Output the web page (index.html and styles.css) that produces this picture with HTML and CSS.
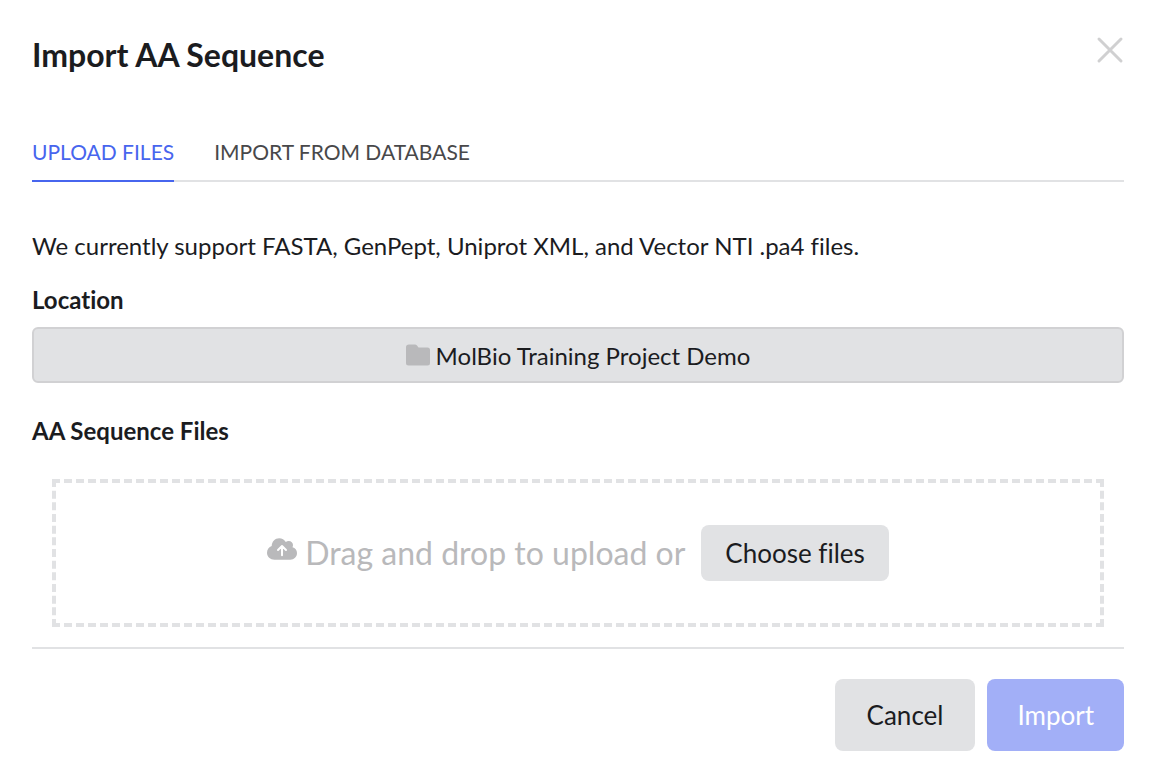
FILE: index.html
```
<!DOCTYPE html>
<html lang="en">
<head>
<meta charset="UTF-8" />
<meta name="viewport" content="width=device-width, initial-scale=1" />
<title>Import AA Sequence</title>
<link rel="stylesheet" href="styles.css">
</head>
<body>
    <main class="modal">
        <header class="modal-header">
            <h1>Import AA Sequence</h1>
            <button type="button" class="close-btn" aria-label="Close">
                <svg viewBox="0 0 28 28" width="28" height="28" fill="none" stroke="#d0d0d1" stroke-width="3" stroke-linecap="round">
                    <path d="M3 3 25 25M25 3 3 25" />
                </svg>
            </button>
        </header>

        <nav class="tabs">
            <a href="#upload" class="tab active">UPLOAD FILES</a>
            <a href="#database" class="tab">IMPORT FROM DATABASE</a>
        </nav>

        <form class="upload-form">
            <p class="hint">We currently support FASTA, GenPept, Uniprot XML, and Vector NTI .pa4 files.</p>

            <label for="location-btn">Location</label>
            <button type="button" id="location-btn" class="location-btn">
                <svg viewBox="0 0 24 22" width="24" height="22" fill="#b9b9bb">
                    <path d="M3 0.500H9Q10 0.500 11 1.500L12.500 3.500H21.500Q24 3.500 24 6V19Q24 21.500 21.500 21.500H2.500Q0 21.500 0 19V3Q0 0.500 3 0.500Z" />
                </svg>
                <span>MolBio Training Project Demo</span>
            </button>

            <label for="choose-btn">AA Sequence Files</label>
            <div class="dropzone">
                <svg class="cloud-icon" viewBox="0 0 30 22" width="30" height="22">
                    <path fill="#b9b9bb" d="M7.500 21.700C3.300 21.700 0 18.600 0 14.700 0 11.600 1.900 9.100 4.700 8.100 4.900 3.600 8 0.300 12.200 0.300 15 0.300 17.500 1.700 18.800 4 19.600 3.300 20.600 3 21.700 3 24.200 3 26 4.800 26 7.100 26 7.800 25.800 8.500 25.500 9.200 28.100 9.800 30 12.200 30 15 30 18.800 27 21.700 23.300 21.700Z" />
                    <path fill="none" stroke="#fff" stroke-width="2" stroke-linecap="round" stroke-linejoin="round" d="M15 17.300V8M11 12 15 8 19 12" />
                </svg>
                <span class="drop-text">Drag and drop to upload or</span>
                <button type="button" id="choose-btn" class="btn choose-btn">Choose files</button>
            </div>

            <footer class="modal-footer">
                <button type="button" class="btn">Cancel</button>
                <button type="submit" class="btn primary" disabled>Import</button>
            </footer>
        </form>
    </main>
</body>
</html>
```
FILE: styles.css
```
* {
    box-sizing: border-box;
}

body {
    margin: 0;
    background: #fff;
    color: #1b1c1f;
    font-family: Lato, "Liberation Sans", sans-serif;
    font-size: 24px;
    line-height: 32px;
    font-variant-ligatures: none;
}

button {
    font-family: inherit;
    font-variant-ligatures: inherit;
    color: inherit;
    border: none;
    cursor: pointer;
}

.modal {
    padding: 36px 30px 28px 32px;
}

.modal-header {
    display: flex;
    justify-content: space-between;
    align-items: flex-start;
}

h1 {
    margin: 0;
    font-size: 32px;
    line-height: 38px;
    font-weight: 700;
}

.close-btn {
    display: flex;
    padding: 0;
    background: transparent;
}

.tabs {
    display: flex;
    gap: 40px;
    margin-top: 62px;
    border-bottom: 2px solid #e1e2e4;
}

.tab {
    padding-bottom: 12px;
    margin-bottom: -2px;
    border-bottom: 2px solid transparent;
    color: #48484a;
    font-size: 21px;
    text-decoration: none;
}

.tab.active {
    color: #4765ee;
    border-color: #4765ee;
}

.upload-form {
    display: flex;
    flex-direction: column;
}

.hint {
    margin: 48px 0 22px;
}

label {
    font-weight: 700;
}

.location-btn {
    display: flex;
    align-items: center;
    justify-content: center;
    gap: 6px;
    height: 56px;
    margin: 11px 0 32px;
    background: #e1e2e4;
    border: 2px solid #d1d1d3;
    border-radius: 6px;
    font-size: 24px;
}

.dropzone {
    display: flex;
    align-items: center;
    justify-content: center;
    height: 148px;
    margin: 32px 20px 20px;
    border: 4px dashed #e1e2e4;
}

.cloud-icon {
    margin: 0 8px 8px 0;
}

.drop-text {
    color: #b9b9bb;
    font-size: 32px;
}

.btn {
    height: 72px;
    padding: 0 32px;
    background: #e1e2e4;
    border-radius: 8px;
    font-size: 26px;
}

.choose-btn {
    height: 56px;
    margin-left: 16px;
    padding: 0 24px;
}

.modal-footer {
    display: flex;
    justify-content: flex-end;
    gap: 12px;
    padding-top: 30px;
    border-top: 2px solid #e1e2e4;
}

.primary {
    padding: 0 30px;
    background: #a2aff7;
    color: #fff;
    cursor: default;
}
```
